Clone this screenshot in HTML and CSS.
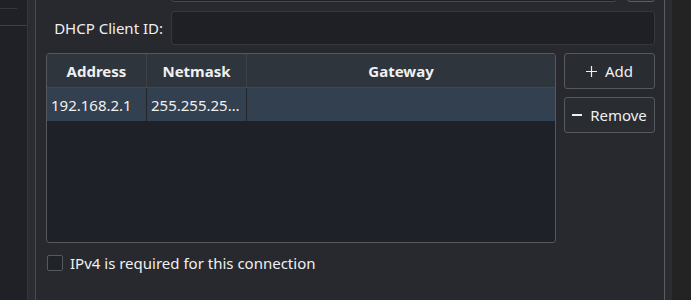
FILE: index.html
```html
<!DOCTYPE html>
<html>
<head>
<meta charset="utf-8">
<link rel="stylesheet" href="styles.css">
</head>
<body>
<div class="window">
  <aside class="sidebar">
    <div class="side-line short"></div>
    <div class="side-line"></div>
  </aside>
  <div class="gutter"></div>
  <main class="content">
    <div class="form-row top-row">
      <div class="label"></div>
      <div class="field"></div>
      <div class="mini-btn"></div>
    </div>
    <div class="form-row">
      <div class="label">DHCP Client ID:</div>
      <div class="field wide"></div>
    </div>
    <div class="routes">
      <div class="table">
        <div class="thead">
          <div class="cell c1">Address</div>
          <div class="cell c2">Netmask</div>
          <div class="cell c3">Gateway</div>
        </div>
        <div class="trow selected">
          <div class="cell c1">192.168.2.1</div>
          <div class="cell c2">255.255.25…</div>
          <div class="cell c3"></div>
        </div>
      </div>
      <div class="actions">
        <button class="btn"><svg width="11" height="11" viewBox="0 0 11 11"><path d="M5.5 0v11M0 5.5h11" stroke="#eff0f1" stroke-width="1.2" fill="none"/></svg><span>Add</span></button>
        <button class="btn"><svg width="10" height="10" viewBox="0 0 10 10"><path d="M0 5h10" stroke="#eff0f1" stroke-width="2" fill="none"/></svg><span>Remove</span></button>
      </div>
    </div>
    <label class="check-row">
      <span class="checkbox"></span>
      <span>IPv4 is required for this connection</span>
    </label>
  </main>
  <div class="gutter right"></div>
  <div class="far"></div>
</div>
</body>
</html>
```

FILE: styles.css
```css
html, body {
  margin: 0;
  padding: 0;
  height: 300px;
  overflow: hidden;
  background: #27292e;
}
body {
  font-family: "Noto Sans", "DejaVu Sans", sans-serif;
  font-size: 15px;
  color: #eff0f1;
}
.window {
  display: flex;
  height: 300px;
}
.sidebar {
  width: 27px;
  background: #1f2127;
  border-right: 1px solid #34363a;
  display: flex;
  flex-direction: column;
}
.side-line {
  height: 1px;
  background: #3d4046;
}
.side-line.short {
  width: 17px;
  margin-top: 8px;
  background: #35373c;
}
.side-line:not(.short) {
  margin-top: 16px;
}
.gutter {
  width: 7px;
  background: #2a2c31;
  border-right: 1px solid #4a4c51;
}
.gutter.right {
  width: 7px;
  border-right: none;
  border-left: 1px solid #5a5c60;
  background: #2a2c30;
}
.far {
  flex: 1;
  background: #232324;
}
.content {
  width: 609px;
  padding-left: 10px;
  padding-right: 9px;
  margin-top: -32px;
  display: flex;
  flex-direction: column;
}
.form-row {
  display: flex;
  align-items: center;
  gap: 8px;
  height: 34px;
  margin-bottom: 8px;
}
.top-row {
  margin-bottom: 9px;
}
.label {
  width: 117px;
  text-align: right;
  flex: none;
}
.field {
  flex: 1;
  height: 32px;
  background: #1e2025;
  border: 1px solid #36393d;
  border-radius: 3px;
}
.top-row .field {
  border-color: #45484c;
}
.mini-btn {
  width: 26px;
  height: 32px;
  margin-left: 2px;
  border: 1px solid #5a5c60;
  border-radius: 3px;
  background: #2a2c30;
}
.routes {
  display: flex;
  gap: 8px;
  height: 190px;
}
.table {
  width: 508px;
  border: 1px solid #55585c;
  border-radius: 3px;
  background: #1f2128;
  overflow: hidden;
}
.thead, .trow {
  display: flex;
  height: 33px;
}
.thead {
  background: #2f353c;
  border-bottom: 1px solid #43474c;
  font-weight: bold;
}
.trow.selected {
  background: #334050;
}
.cell {
  display: flex;
  align-items: center;
  white-space: nowrap;
  overflow: hidden;
}
.thead .cell {
  justify-content: center;
}
.trow .cell {
  padding-left: 4px;
}
.c1, .c2 {
  width: 99px;
  border-right: 1px solid #3e4248;
  flex: none;
}
.trow .c1, .trow .c2 {
  width: 95px;
  border-right-color: #22252b;
}
.c3 {
  flex: 1;
}
.actions {
  display: flex;
  flex-direction: column;
  gap: 8px;
}
.btn {
  width: 91px;
  height: 36px;
  border: 1px solid #55585c;
  border-radius: 3px;
  background: #292c30;
  color: #eff0f1;
  font: inherit;
  display: flex;
  align-items: center;
  justify-content: center;
  gap: 8px;
  padding: 0;
}
.check-row {
  display: flex;
  align-items: center;
  gap: 7px;
  height: 16px;
  margin-top: 12px;
  padding-left: 1px;
}
.checkbox {
  width: 14px;
  height: 14px;
  border: 1px solid #55585c;
  border-radius: 2px;
  background: #202328;
}
```
